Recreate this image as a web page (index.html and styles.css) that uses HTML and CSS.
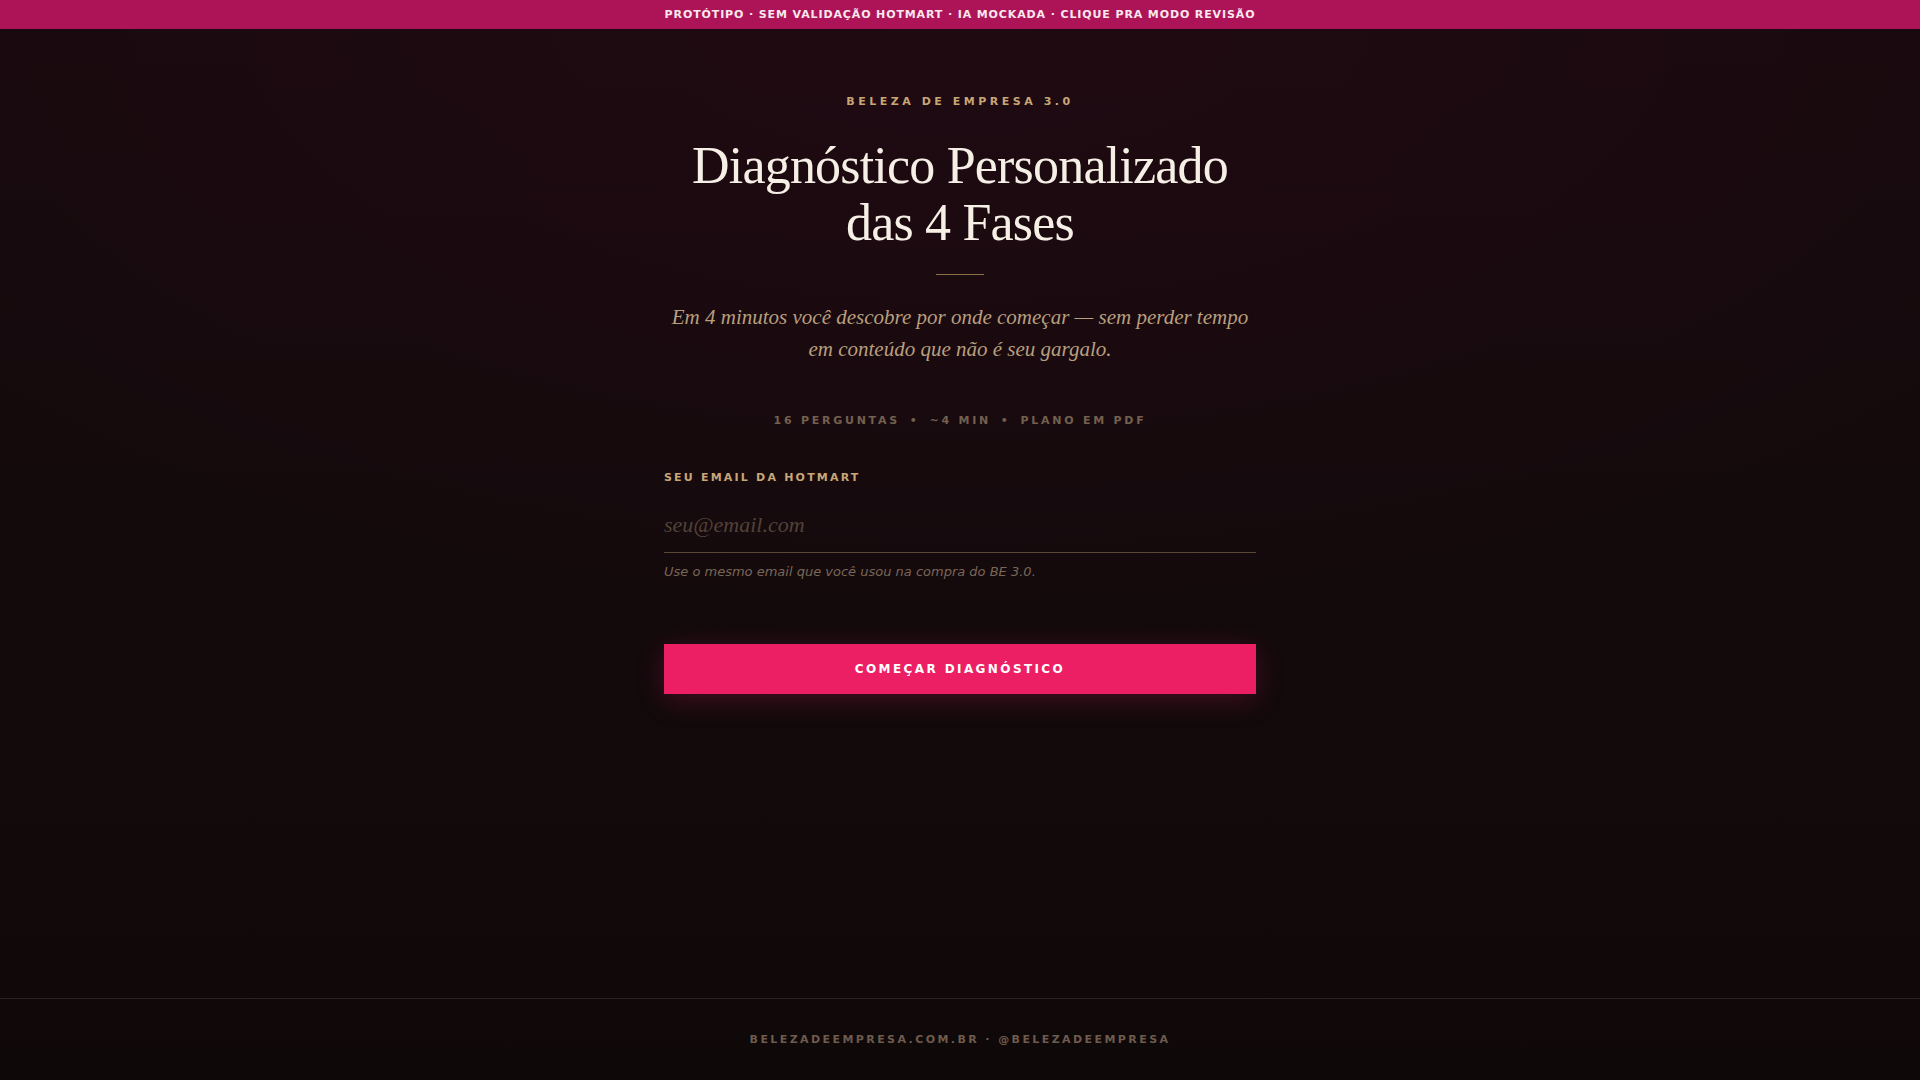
FILE: index.html
```html
<!DOCTYPE html>
<html lang="pt-BR">
<head>
<meta charset="utf-8">
<title>Diagnóstico Personalizado das 4 Fases</title>
<link rel="stylesheet" href="styles.css">
</head>
<body>
<div class="topbar">PROTÓTIPO · SEM VALIDAÇÃO HOTMART · IA MOCKADA · CLIQUE PRA MODO REVISÃO</div>
<main class="main">
  <div class="content">
    <div class="eyebrow">BELEZA DE EMPRESA 3.0</div>
    <h1 class="title">Diagnóstico Personalizado<br>das 4 Fases</h1>
    <div class="divider"></div>
    <p class="subtitle">Em 4 minutos você descobre por onde começar — sem perder tempo<br>em conteúdo que não é seu gargalo.</p>
    <div class="stats">16 PERGUNTAS<span class="dot">•</span>~4 MIN<span class="dot">•</span>PLANO EM PDF</div>
    <form class="form">
      <label class="label" for="email">SEU EMAIL DA HOTMART</label>
      <input class="input" id="email" type="email" placeholder="seu@email.com">
      <p class="help">Use o mesmo email que você usou na compra do BE 3.0.</p>
      <button class="button" type="button">COMEÇAR DIAGNÓSTICO</button>
    </form>
  </div>
</main>
<footer class="footer">BELEZADEEMPRESA.COM.BR · @BELEZADEEMPRESA</footer>
</body>
</html>
```
FILE: styles.css
```css
* { box-sizing: border-box; }
html, body { margin: 0; padding: 0; }
body {
  min-height: 100vh;
  display: flex;
  flex-direction: column;
  font-family: "DejaVu Sans", sans-serif;
  background-color: #0f0809;
  background-image:
    radial-gradient(ellipse 70% 60% at 50% 0%, rgba(40, 10, 22, 0.55) 0%, rgba(40, 10, 22, 0) 100%),
    linear-gradient(180deg, #170a0e 0%, #130a0c 55%, #0f0809 100%);
}
.topbar {
  height: 29px;
  line-height: 29px;
  background: #ad1457;
  color: #fbe8ef;
  text-align: center;
  font-size: 11px;
  font-weight: bold;
  letter-spacing: 0.08em;
}
.main {
  flex: 1;
  padding-top: 65px;
}
.content {
  width: 592px;
  margin: 0 auto;
  text-align: center;
}
.eyebrow {
  font-size: 11px;
  line-height: 16px;
  font-weight: bold;
  letter-spacing: 0.32em;
  color: #c8a676;
}
.title {
  margin: 27px 0 0;
  font-family: "Liberation Serif", serif;
  font-weight: normal;
  font-size: 52px;
  line-height: 1.1;
  letter-spacing: -0.8px;
  color: #f6efe6;
}
.divider {
  width: 48px;
  height: 1px;
  background: #8c7048;
  margin: 23px auto 0;
}
.subtitle {
  margin: 26px 0 0;
  font-family: "Liberation Serif", serif;
  font-style: italic;
  font-size: 21px;
  line-height: 32px;
  color: #b89f7e;
}
.stats {
  margin-top: 48px;
  font-size: 11px;
  line-height: 16px;
  font-weight: bold;
  letter-spacing: 0.25em;
  color: #74604f;
}
.dot { margin: 0 0.9em; }
.form {
  margin-top: 41px;
  text-align: left;
  display: flex;
  flex-direction: column;
}
.label {
  font-size: 11px;
  line-height: 16px;
  font-weight: bold;
  letter-spacing: 0.2em;
  color: #c8a676;
}
.input {
  margin-top: 15px;
  width: 100%;
  border: 0;
  border-bottom: 1px solid #5a4737;
  background: transparent;
  padding: 10px 0 13px;
  font-family: "Liberation Serif", serif;
  font-style: italic;
  font-size: 22px;
  line-height: 28px;
  color: #f6efe6;
  outline: none;
}
.input::placeholder { color: #524237; }
.help {
  margin: 10px 0 0;
  font-size: 13px;
  line-height: 18px;
  font-style: italic;
  color: #7a6656;
}
.button {
  margin-top: 63px;
  height: 50px;
  width: 100%;
  border: 0;
  background: #ec1f64;
  color: #ffffff;
  font-family: "DejaVu Sans", sans-serif;
  font-size: 12px;
  font-weight: bold;
  letter-spacing: 0.2em;
  box-shadow: 0 6px 28px rgba(236, 31, 100, 0.22);
  cursor: pointer;
}
.footer {
  border-top: 1px solid #2d231f;
  padding: 34px 0 33px;
  line-height: 14px;
  text-align: center;
  font-size: 11px;
  font-weight: bold;
  letter-spacing: 0.22em;
  color: #6e5b4d;
}
```
